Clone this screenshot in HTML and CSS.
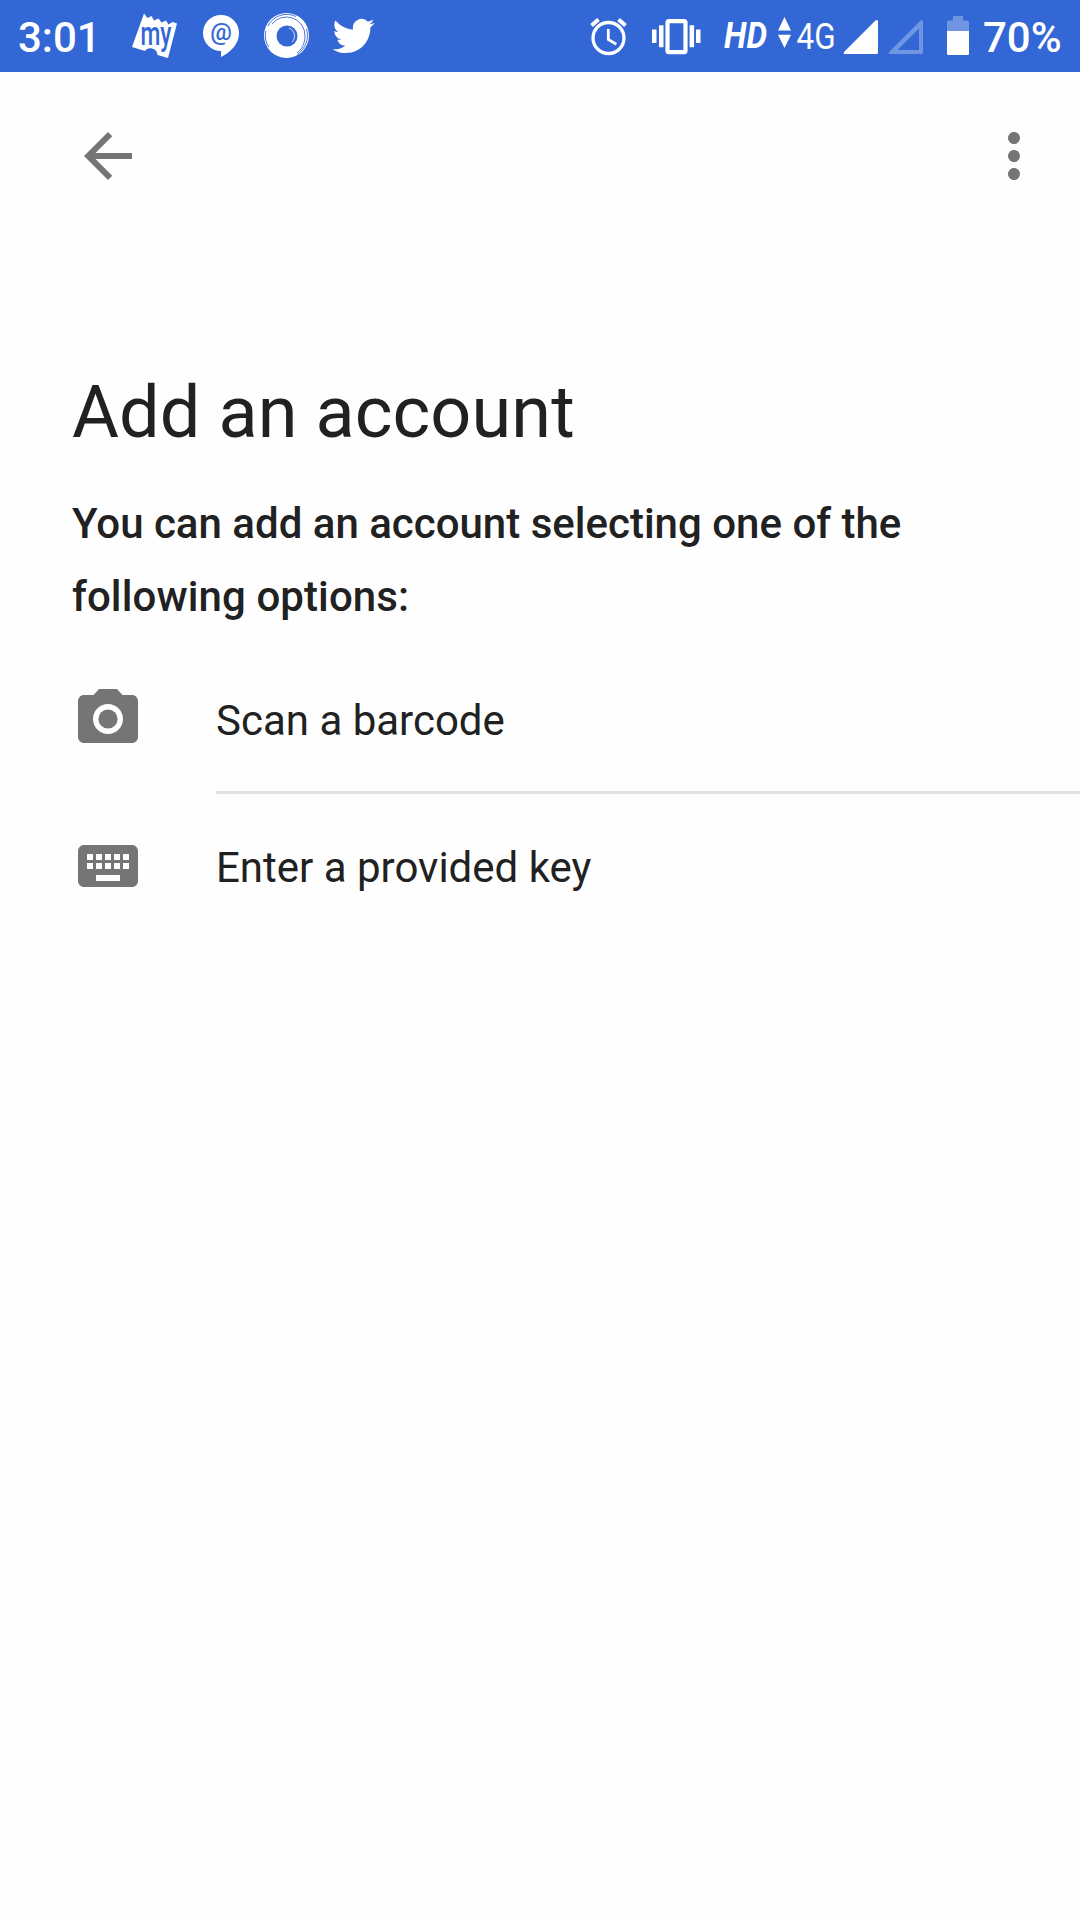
FILE: index.html
```
<!DOCTYPE html>
<html lang="en">
<head>
  <meta charset="UTF-8" />
  <meta name="viewport" content="width=device-width, initial-scale=1.0"/>
  <title>Add an account</title>
  <link rel="stylesheet" href="styles.css">
</head>
<body>

  <header class="status-bar">
    <div class="status-left">
      <span class="clock">3:01</span>
      <svg width="50" height="72" viewBox="130 0 50 72">
        <path fill="#fff" d="M144 13.500L147.500 18l4-2 2.500 4.500 4.500-2 3 4 4.500-2 2.500 4 4-2.500 4.500 1.500L168 58l-10.500-3c0-7-10-9-12.500-4l-13-4z"/>
        <text class="my" x="140.500" y="45" textLength="31" lengthAdjust="spacingAndGlyphs">my</text>
      </svg>
      <svg width="46" height="72" viewBox="198 0 46 72">
        <path fill="#fff" d="M221 15a18 18 0 1 0 0 36v6c10-5 18-13 18-24a18 18 0 0 0-18-18z"/>
        <text class="at" x="221" y="40" text-anchor="middle">@</text>
      </svg>
      <svg width="50" height="72" viewBox="262 0 50 72">
        <circle cx="286.500" cy="35.500" r="22.500" fill="#fff"/>
        <circle cx="287" cy="36" r="10.500" fill="#3367d6"/>
        <g fill="none" stroke="#3367d6" stroke-width=".9">
          <path d="M268 26a21 21 0 0 1 28-9.500M272 24a18.500 18.500 0 0 1 33 12c0 7-3 13-8 17M306.500 29c3 10-1 19-9 25.500M266 31c-1.500 7 0 12 3 16"/>
        </g>
        <path fill="none" stroke="#fff" stroke-width=".8" d="M289 28a8.500 8.500 0 0 1 3 14"/>
      </svg>
      <svg width="48" height="72" viewBox="330 0 48 72">
        <path fill="#fff" transform="translate(332.600 15) scale(1.750)" d="M23.953 4.570a10 10 0 0 1-2.825.775 4.958 4.958 0 0 0 2.163-2.723c-.951.555-2.005.959-3.127 1.184a4.920 4.920 0 0 0-8.384 4.482C7.690 8.095 4.067 6.130 1.640 3.162a4.822 4.822 0 0 0-.666 2.475c0 1.710.870 3.213 2.188 4.096a4.904 4.904 0 0 1-2.228-.616v.060a4.923 4.923 0 0 0 3.946 4.827 4.996 4.996 0 0 1-2.212.085 4.936 4.936 0 0 0 4.604 3.417 9.867 9.867 0 0 1-6.102 2.105c-.390 0-.779-.023-1.170-.067a13.995 13.995 0 0 0 7.557 2.209c9.053 0 13.998-7.496 13.998-13.985 0-.210 0-.420-.015-.630a9.935 9.935 0 0 0 2.460-2.548z"/>
      </svg>
    </div>

    <div class="status-right">
      <!-- alarm -->
      <svg width="60" height="72" viewBox="580 0 60 72">
        <g fill="none" stroke="#fff" stroke-width="3.300">
          <circle cx="608.500" cy="38" r="15.500"/>
          <path d="M608.300 29v10.500l8 4.700" stroke-width="2.800"/>
          <path d="M591.500 25.500l7-6M618.500 19.500l7 6" stroke-width="4"/>
        </g>
      </svg>
      <!-- vibrate -->
      <svg width="70" height="72" viewBox="640 0 70 72">
        <rect x="667.500" y="21.200" width="18" height="31" rx="1.500" fill="none" stroke="#fff" stroke-width="4.200"/>
        <path fill="#fff" d="M652 29.500h4.500V43H652zM659 25.300h4.500v22H659zM689.600 25.300h4.500v22h-4.500zM696 29.500h4.500V43H696z"/>
      </svg>
      <svg width="62" height="72" viewBox="710 0 62 72">
        <text class="hd" x="724" y="48" textLength="43" lengthAdjust="spacingAndGlyphs">HD</text>
      </svg>
      <svg width="24" height="72" viewBox="772 0 24 72">
        <path fill="#fff" d="M784.500 17l6.500 13.500h-13zM778 34.700h13L784.500 48z"/>
      </svg>
      <svg width="46" height="72" viewBox="796 0 46 72">
        <text class="net" x="796.500" y="48.500" textLength="39" lengthAdjust="spacingAndGlyphs">4G</text>
      </svg>
      <svg width="42" height="72" viewBox="842 0 42 72">
        <path fill="#fff" d="M875.500 20.500q2.500-1.500 2.500 1V52.500q0 1.500-1.500 1.500H845q-2 0-1-2z"/>
      </svg>
      <svg width="46" height="72" viewBox="884 0 46 72">
        <path fill="#fff" fill-opacity=".3" fill-rule="evenodd" d="M920.500 20.500q2.500-1.500 2.500 1V52.500q0 1.500-1.500 1.500H890q-2 0-1-2zM919 28.500L897.500 50H919z"/>
      </svg>
      <svg width="50" height="72" viewBox="930 0 50 72">
        <path fill="#fff" fill-opacity=".3" d="M953 16h10v4.500h4.500q1.500 0 1.500 1.500v9h-22v-9q0-1.500 1.500-1.500h4.500z"/>
        <path fill="#fff" d="M947 31h22v22.500q0 1.500-1.500 1.500h-19q-1.500 0-1.500-1.500z"/>
      </svg>
      <span class="battery">70%</span>
    </div>
  </header>

  <nav class="toolbar">
    <svg class="icon" viewBox="0 0 24 24"><path d="M20 11H7.830l5.590-5.590L12 4l-8 8 8 8 1.410-1.410L7.830 13H20v-2z"/></svg>
    <svg class="icon" viewBox="0 0 24 24"><path d="M12 8c1.100 0 2-.9 2-2s-.9-2-2-2-2 .9-2 2 .9 2 2 2zm0 2c-1.100 0-2 .9-2 2s.9 2 2 2 2-.9 2-2-.9-2-2-2zm0 6c-1.100 0-2 .9-2 2s.9 2 2 2 2-.9 2-2-.9-2-2-2z"/></svg>
  </nav>

  <main>
    <h1>Add an account</h1>
    <p class="intro">You can add an account selecting one of the<br><span class="second">following options:</span></p>

    <div class="option">
      <svg class="icon" viewBox="0 0 24 24">
        <circle cx="12" cy="12" r="3.200"/>
        <path d="M9 2L7.170 4H4c-1.100 0-2 .9-2 2v12c0 1.100.9 2 2 2h16c1.100 0 2-.9 2-2V6c0-1.100-.9-2-2-2h-3.170L15 2H9zm3 15c-2.760 0-5-2.240-5-5s2.240-5 5-5 5 2.240 5 5-2.240 5-5 5z"/>
      </svg>
      <span>Scan a barcode</span>
    </div>
    <div class="divider"></div>
    <div class="option">
      <svg class="icon" viewBox="0 0 24 24">
        <path d="M20 5H4c-1.100 0-1.990.9-1.990 2L2 17c0 1.100.9 2 2 2h16c1.100 0 2-.9 2-2V7c0-1.100-.9-2-2-2zm-9 3h2v2h-2V8zm0 3h2v2h-2v-2zM8 8h2v2H8V8zm0 3h2v2H8v-2zm-1 2H5v-2h2v2zm0-3H5V8h2v2zm9 7H8v-2h8v2zm0-4h-2v-2h2v2zm0-3h-2V8h2v2zm3 3h-2v-2h2v2zm0-3h-2V8h2v2z"/>
      </svg>
      <span>Enter a provided key</span>
    </div>
  </main>

</body>
</html>
```
FILE: styles.css
```
* {
  box-sizing: border-box;
}

body {
  margin: 0;
  min-height: 100vh;
  background: #fefefe;
  color: #212121;
  font-family: Roboto, sans-serif;
}

svg {
  display: block;
  flex-shrink: 0;
  overflow: visible;
}

.status-bar {
  display: flex;
  justify-content: space-between;
  height: 72px;
  background: #3367d6;
  color: white;
  font-size: 42px;
  font-weight: 500;
  line-height: 76px;
}

.status-left {
  display: flex;
  gap: 18px;
}

.status-right {
  display: flex;
}

.clock {
  width: 112px;
  padding-left: 18px;
}

.battery {
  width: 100px;
  padding-left: 3px;
}

.my {
  font-size: 34px;
  font-weight: 500;
  fill: #3367d6;
}

.at {
  font-size: 24px;
  font-weight: 500;
  fill: #3367d6;
}

.hd {
  font-size: 36px;
  font-weight: 700;
  font-style: italic;
  fill: white;
}

.net {
  font-size: 37px;
  font-weight: 400;
  fill: white;
}

.toolbar {
  display: flex;
  justify-content: space-between;
  padding: 48px 30px 0 72px;
}

.icon {
  width: 72px;
  height: 72px;
  fill: #757575;
}

h1 {
  margin: 179px 0 0 72px;
  font-size: 72px;
  font-weight: 400;
  line-height: 84px;
  letter-spacing: 0.1px;
}

.intro {
  margin: 32px 0 14px 72px;
  font-size: 42px;
  font-weight: 500;
  line-height: 73px;
}

.second {
  letter-spacing: 0.1px;
}

.option {
  display: flex;
  align-items: center;
  gap: 72px;
  height: 144px;
  padding-left: 72px;
  font-size: 42px;
}

.option span {
  padding-top: 3px;
}

.divider {
  height: 3px;
  margin-left: 216px;
  background: #e0e0e0;
}
```
